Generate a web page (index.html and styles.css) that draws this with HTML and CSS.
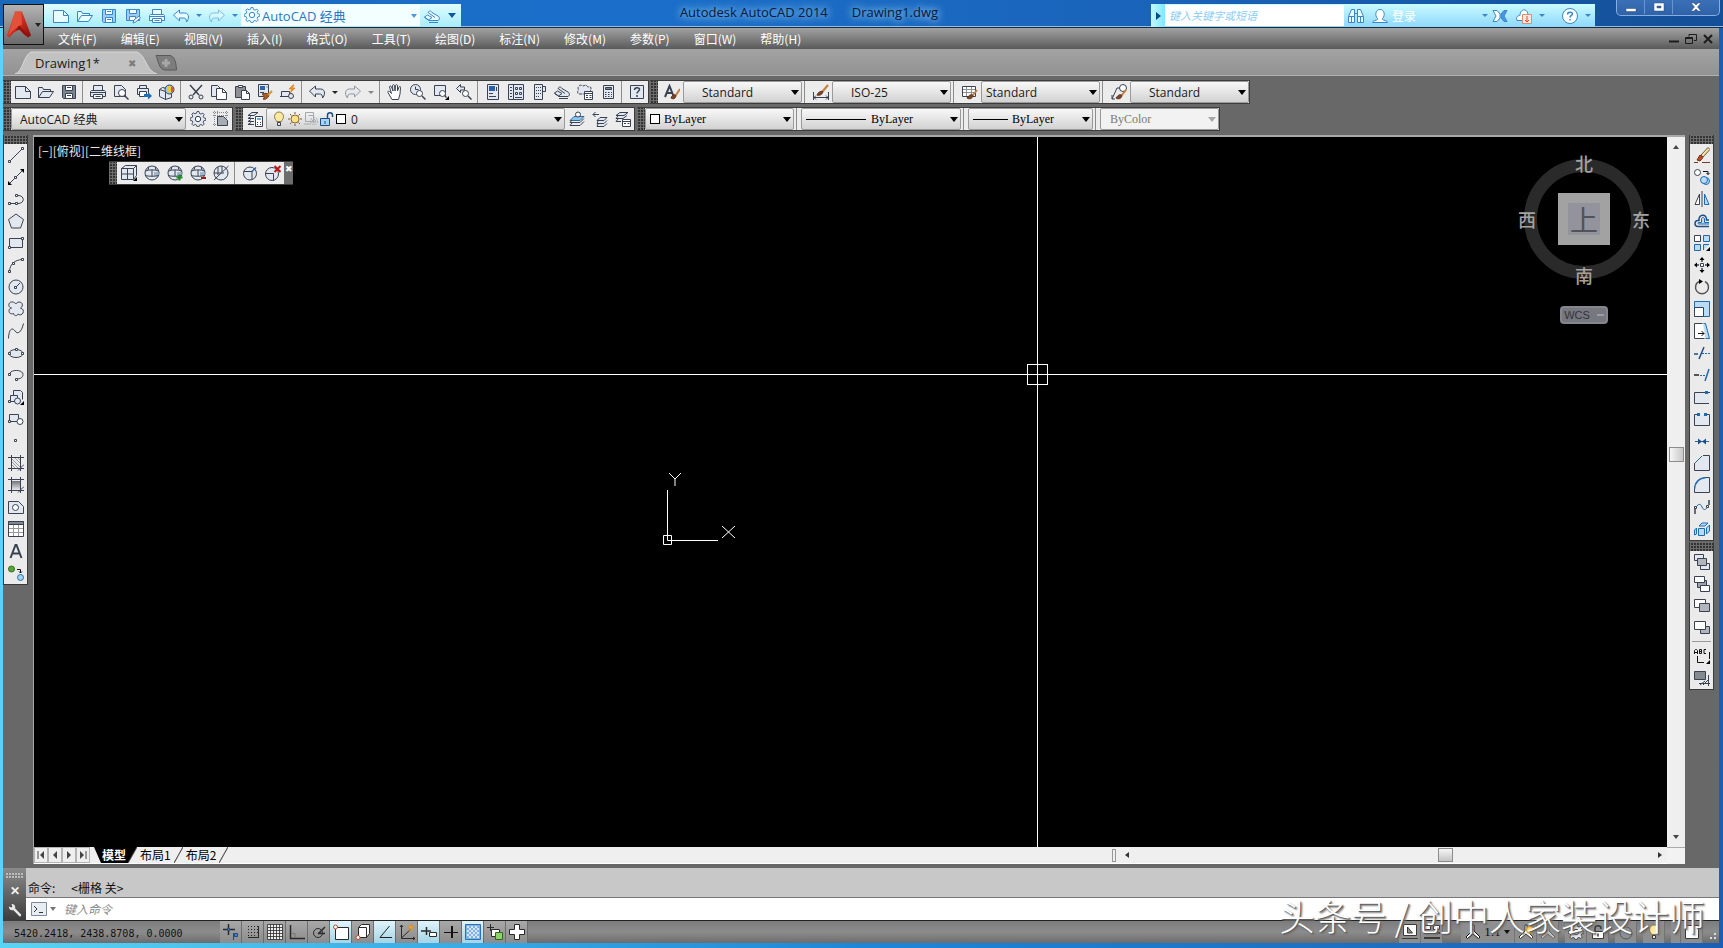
FILE: index.html
```html
<!DOCTYPE html>
<html lang="zh-CN">
<head>
<meta charset="utf-8">
<title>Autodesk AutoCAD 2014 Drawing1.dwg</title>
<link rel="stylesheet" href="styles.css">
</head>
<body>
<svg class="sprite" aria-hidden="true">
  <defs>
    <linearGradient id="redA" x1="0" y1="0" x2="1" y2="1"><stop offset="0" stop-color="#f0604a"/><stop offset=".55" stop-color="#c8281c"/><stop offset="1" stop-color="#7d0d0a"/></linearGradient>
    <linearGradient id="grayDown" x1="0" y1="0" x2="0" y2="1"><stop offset="0" stop-color="#70747a"/><stop offset="1" stop-color="#e6e8ea"/></linearGradient>
  </defs>
  <symbol id="new" viewBox="0 0 16 16"><path class="f" d="M.5 2.500h10l5 5v7H.5z"/><path d="M10.500 2.500v5h5"/></symbol>
  <symbol id="open" viewBox="0 0 16 16"><path class="f" d="M.5 13.500V3.500h4l1 2h7v2M.5 13.500l4-6h11l-4 6z"/></symbol>
  <symbol id="save" viewBox="0 0 16 16"><path class="d" d="M1.500 1.500h13v13h-12l-1-1z"/><path class="w" d="M4.500 1.500h7v5h-7zM4.500 9.500h7v5h-7z"/><path d="M6 11.500h4M6 3.500h4"/></symbol>
  <symbol id="saveas" viewBox="0 0 16 16"><path class="d" d="M1.500 1.500h13v11h-13z"/><path class="w" d="M4.500 1.500h7v4h-7zM4.500 8.500h6v4h-6z"/><path class="w" d="M8 15l1-3 5-4 1.500 2-5 4z"/></symbol>
  <symbol id="print" viewBox="0 0 16 16"><path class="f" d="M3.500 6V1.500h9V6"/><path class="f" d="M1.500 6.500h13l1 1v5H.5v-5z"/><path class="w" d="M3.500 10.500h9v4h-9z"/><path d="M.5 8.500h15M5.500 12.500h5"/></symbol>
  <symbol id="preview" viewBox="0 0 16 16"><path class="f" d="M1.500 12.500v-11h7l4 4v7z"/><circle class="w" cx="9" cy="9" r="3.500"/><path class="b2" d="M11.500 11.500l4 4"/></symbol>
  <symbol id="publish" viewBox="0 0 16 16"><path class="f" d="M3.500 4V1.500h7V4M1.500 4.500h11v6h-11z"/><path class="w" d="M3.500 7.500h7v5h-7z"/><path fill="#1e6fb8" stroke="none" d="M8 10h4V8l4 4-4 3.500V13H8z"/></symbol>
  <symbol id="print3d" viewBox="0 0 16 16"><path class="f" d="M.5 5.500l3-2 9 2v8l-6 2-6-3z"/><path d="M.5 5.500l6 2v8"/><circle cx="10.500" cy="5.500" r="4.500" fill="#8fd0ee"/><path fill="#f0c43c" stroke="none" d="M9 2l3 0 0 7-3-1z"/><path fill="#df5133" stroke="none" d="M12 2.500l2 1v4l-2 1z"/></symbol>
  <symbol id="cut" viewBox="0 0 16 16"><path class="b2" d="M2 1l9 10M14 1L5 11"/><circle cx="3" cy="13" r="2"/><circle cx="13" cy="13" r="2"/></symbol>
  <symbol id="copy" viewBox="0 0 16 16"><path class="f" d="M.5 12.500v-11h6l3 3v8z"/><path class="w" d="M5.500 15.500v-11h6l4 4v7z"/><path d="M11.500 4.500v4h4"/></symbol>
  <symbol id="paste" viewBox="0 0 16 16"><path fill="#8f8f8f" d="M1.500 2.500h10v11h-10z"/><path class="w" d="M4.500 1.500h4v2h-4z"/><path class="w" d="M7.500 6.500h5l3 3v6h-8z"/><path d="M12.500 6.500v3h3"/></symbol>
  <symbol id="match" viewBox="0 0 16 16"><path class="f" d="M1.500.5h10v12h-10z"/><path fill="#2866b4" stroke="none" d="M3 2h5v4H3z"/><path d="M3 8.500h4M9.500 3h1"/><path fill="#a25c28" stroke="#6f3c18" d="M5 10c3-1 6-1 7 1-1 4-5 5-6 4 2-1 1-3-1-5z"/><path stroke="#d99537" stroke-width="2" d="M11 11l4-4"/></symbol>
  <symbol id="blockedit" viewBox="0 0 16 16"><path class="f" d="M1.500 12.500v-5h8v5z"/><circle class="f" cx="11" cy="12" r="2.500"/><path d="M0 12.500h3"/><path fill="#f59a1e" stroke="#dc7a12" stroke-width=".7" d="M13 1l-4 4h3l-2 4 5-5h-3l2-3z"/></symbol>
  <symbol id="undo" viewBox="0 0 16 16"><path class="f" d="M.5 7l6-5v3h5c3 0 4 2 4 4s-1 4-2 5c0-3-1-4-3-4h-4v3z"/></symbol>
  <symbol id="redo" viewBox="0 0 16 16"><path class="f" d="M15.500 7l-6-5v3h-5c-3 0-4 2-4 4s1 4 2 5c0-3 1-4 3-4h4v3z"/></symbol>
  <symbol id="pan" viewBox="0 0 16 16"><path class="w" d="M5 15.500l-4-7c-.5-1.500 1-2 2-.5l1.500 1.500L2.500 3c0-1 1.500-1.500 2 0L6 7 5.500 1.500c0-1 2-1 2 0L8 7l.5-5.500c0-1 2-1 2 0L10.500 7l1.500-4c.5-1 2-.5 1.500.5L13 10l-1.500 5.500z"/></symbol>
  <symbol id="zoomrt" viewBox="0 0 16 16"><circle class="f" cx="5.500" cy="5.500" r="5"/><path d="M5.500 2.500v3h3"/><circle class="w" cx="9.500" cy="9.500" r="3"/><path class="b2" d="M12 12l3.500 3.500"/></symbol>
  <symbol id="zoomwin" viewBox="0 0 16 16"><path class="f" d="M1.500 1.500h11v10h-11z"/><circle class="w" cx="9.500" cy="9.500" r="3"/><path class="b2" d="M12 12l1.500 1.500"/><path class="k" d="M16 12v4h-4z"/></symbol>
  <symbol id="zoomprev" viewBox="0 0 16 16"><path class="f" d="M.5 4.500l4-4v2.500h4v3h-4v2.500z"/><circle class="w" cx="9.500" cy="9.500" r="3"/><path class="b2" d="M12 12l3.500 3.500"/></symbol>
  <symbol id="props" viewBox="0 0 16 16"><path class="f" d="M2.500.5h11v15h-11z"/><path fill="#2d5fa8" stroke="none" d="M4 2h6v5H4z"/><path d="M11.500 3v4M4 9.500h4M4 12.500h7"/></symbol>
  <symbol id="design" viewBox="0 0 16 16"><path class="f" d="M.5.5h15v15H.5zM5.500.5v15"/><path d="M7.500 3.500h2v2h-2zM11.500 3.500h2v2h-2zM7.500 8.500h2v2h-2zM11.500 8.500h2v2h-2zM2 3.500h2M2 6.500h2M2 9.500h2M2 12.500h2M7 13.500h7"/></symbol>
  <symbol id="palettes" viewBox="0 0 16 16"><path class="f" d="M3.500.5h8v15h-8zM11.500 2.500h3v5h-3z"/><path d="M5 3.500h1M7 3.500h1M9 3.500h1M5 6.500h1M7 6.500h1M9 6.500h1M5 9.500h1M7 9.500h1M9 9.500h1M5 12.500h1M7 12.500h1"/></symbol>
  <symbol id="sheet" viewBox="0 0 16 16"><path class="f" d="M.5 9l3-2L8 9.500 4.500 12zM4 4.500c1-2 3-2 4 0l5 3c3 1 3 4 1 5H5l-4.500-3"/><path d="M5 14.500h9M4 4.500l7 5"/></symbol>
  <symbol id="markup" viewBox="0 0 16 16"><path class="f" d="M2 2c2-2 3 0 4 0s3-2 4 0 4 0 4 2-1 2 0 4-2 2-3 2H3c-2 0-3-1-2-3S0 4 2 2z" stroke-dasharray="3 1"/><path class="w" d="M7.500 7.500h8v8h-8z"/><path d="M7.500 9.500h8M9 11.500h2M9 13.500h2M12.500 11.500h2M12.500 13.500h2"/></symbol>
  <symbol id="calc" viewBox="0 0 16 16"><path class="f" d="M3.500 1.500h10v13h-10z"/><path class="d" d="M5.500 3.500h6v2h-6z"/><path d="M5 8.500h1.500M8 8.500h1.500M11 8.500h1M5 10.500h1.500M8 10.500h1.500M11 10.500h1M5 12.500h1.500M8 12.500h1.500M11 12.500h1"/></symbol>
  <symbol id="help" viewBox="0 0 16 16"><path class="f" d="M1.500 1.500h13v13h-13z"/><path class="b2" d="M5.500 6c0-3 5-3 5-.5C10.500 7 8 7.500 8 9.500M8 11v2"/></symbol>
  <symbol id="textstyle" viewBox="0 0 16 16"><path stroke-width="2" d="M1 13L5.500 2 9.500 12M3 9h5"/><path fill="#7b4424" stroke="#5f3319" d="M7 14c1-3 3-4 5-3 0 3-2 5-5 3z"/><path stroke="#c97d3a" stroke-width="2" d="M12 11l4-6"/></symbol>
  <symbol id="dimstyle" viewBox="0 0 16 16"><path d="M.5 8v8M15.500 8v8M1 13.500h14M3 11.500l-2 2 2 2M13 11.500l2 2-2 2"/><path fill="#7b4424" stroke="#5f3319" d="M4 11c1-3 4-4 6-4 0 3-3 5-6 4z"/><path stroke="#c97d3a" stroke-width="2" d="M10 7l5-6"/></symbol>
  <symbol id="tablestyle" viewBox="0 0 16 16"><path class="w" d="M.5 2.500h13v10H.5z"/><path stroke="#8a9098" d="M1 5.500h12M1 8.500h12M4.500 3v9M9.500 3v9"/><path fill="#7b4424" stroke="#5f3319" d="M5 14c2-3 4-4 6-3 0 3-3 5-6 3z"/><path stroke="#c97d3a" stroke-width="2" d="M11 11l4-5"/></symbol>
  <symbol id="mleader" viewBox="0 0 16 16"><path d="M1 15L6 4h4M1 11v4h3"/><circle class="w" cx="12" cy="4" r="3.500"/><path fill="#7b4424" stroke="#5f3319" d="M5 14c2-3 4-4 6-3 0 3-3 5-6 3z"/><path stroke="#c97d3a" stroke-width="2" d="M11 11l4-5"/></symbol>
  <symbol id="gear" viewBox="0 0 16 16"><path class="f" stroke-width=".9" d="M7 .5h2l.5 2 1.500.6 1.800-1 1.400 1.400-1 1.800.6 1.500 2 .5v2l-2 .5-.6 1.500 1 1.800-1.400 1.400-1.800-1-1.500.6-.5 1.600H7l-.5-1.600-1.500-.6-1.800 1-1.400-1.400 1-1.800-.6-1.500-2-.5V7l2-.5.6-1.500-1-1.800L3.200 1.800l1.800 1 1.500-.6z"/><circle class="w" cx="8" cy="8" r="2.700"/></symbol>
  <symbol id="wssave" viewBox="0 0 16 16"><path stroke="#888" d="M0 1.500h16M0 4.500h16M1.500 0v16M4.500 0v16M13.500 0v16M0 13.500h16" stroke-dasharray="1 1"/><path fill="#a9adb3" d="M4.500 14.500v-9h6l4 4v5z"/></symbol>
  <symbol id="layerprops" viewBox="0 0 16 16"><path class="f" d="M5 1.500h6l-4 3H1zM1 7.500h6M1 10.500h6M1 13.500h6M1 7.500l3-2M1 10.500l3-2M1 13.500l3-2"/><path class="w" d="M8.500 5.500h7v10h-7z"/><path fill="#6faee0" stroke="none" d="M10 7h4v2h-4z"/><path d="M10 11.500h1M13 11.500h1M10 13.500h1M13 13.500h1"/></symbol>
  <symbol id="bulb" viewBox="0 0 16 16"><path fill="#ffe9a0" stroke="#8a7a4a" d="M5.500 10.500c0-1-2-2.500-2-5a4.500 4.500 0 0 1 9 0c0 2.500-2 4-2 5z"/><path class="f" d="M6.500 11.500h3v3h-3z"/></symbol>
  <symbol id="sun" viewBox="0 0 16 16"><circle cx="8" cy="8" r="4" fill="#ffe08a" stroke="#8a6a30"/><path stroke="#7a5a30" d="M8 1v2M8 13v2M1 8h2M13 8h2M3 3l1.500 1.500M11.500 11.500L13 13M3 13l1.500-1.500M11.500 4.500L13 3"/></symbol>
  <symbol id="freeze" viewBox="0 0 16 16"><g stroke="#a4a8ad"><path d="M2.500 1.500h8v9h-8zM5.500 4.500h5M1 13h7"/><circle cx="11" cy="10" r="3.500" stroke-dasharray="2 1"/><circle cx="11" cy="10" r="1.500"/></g></symbol>
  <symbol id="lock" viewBox="0 0 16 16"><path fill="#a9d3f2" stroke="#1f4f80" d="M1.500 7.500h9v7h-9z"/><path stroke="#1f4f80" stroke-width="1.500" d="M8.500 7V4c0-3 5-3 5 0v2"/><path stroke="#1f4f80" d="M6 10v3"/></symbol>
  <symbol id="layercur" viewBox="0 0 16 16"><path fill="#8cc6ee" stroke="#2f6b9c" d="M5 5.500h10l-4 4H1z"/><path d="M3 9l-2 2.500h10l4-4M3 12l-2 2.500h10l4-4"/><circle class="w" cx="9" cy="3.500" r="2.500"/></symbol>
  <symbol id="layerprev" viewBox="0 0 16 16"><path d="M1 3.500h6M3.500 1L1 3.500 3.500 6"/><path class="f" d="M8 6.500h7l-3 3H5zM6 10l-1 2.500h7l3-3M6 13l-1 2.500h7l3-3"/></symbol>
  <symbol id="layerstate" viewBox="0 0 16 16"><path class="f" d="M5 1.500h8l-4 3H1zM3 5l-2 2.500h7l4-3M3 8l-2 2.500h5"/><path class="w" d="M7.500 8.500h8v7h-8z"/><path d="M7.500 10.500h8M9 12.500h2M12.500 12.500h2"/></symbol>
  <symbol id="line" viewBox="0 0 16 16"><path d="M2 14L14 2"/><path class="w" d="M.5 13.500h2v2h-2zM13.500.5h2v2h-2z"/></symbol>
  <symbol id="xline" viewBox="0 0 16 16"><path d="M1 15L15 1"/><path class="k" d="M16 0v4l-4-4zM0 16v-4l4 4z"/><path class="w" d="M6.500 7.500h2v2h-2z"/></symbol>
  <symbol id="pline" viewBox="0 0 16 16"><path d="M1 12.500h9c7 0 7-8 0-8H9"/><path class="w" d="M.5 11.500h2v2h-2zM7.500 11.500h2v2h-2zM7.500 3.500h2v2h-2z"/></symbol>
  <symbol id="polygon" viewBox="0 0 16 16"><path class="f" d="M8 1l7.500 5.500-3 8.500h-9l-3-8.500z"/></symbol>
  <symbol id="rect" viewBox="0 0 16 16"><path class="f" d="M1.500 3.500h13v9h-13z"/><path class="w" d="M.5 11.500h2v2h-2zM13.500 2.500h2v2h-2z"/></symbol>
  <symbol id="arc" viewBox="0 0 16 16"><path d="M1.500 14C2 7 7 3 14 2.500"/><path class="w" d="M.5 13.500h2v2h-2zM4.500 5.500h2v2h-2zM13.500 1.500h2v2h-2z"/></symbol>
  <symbol id="circle" viewBox="0 0 16 16"><circle class="f" cx="8" cy="8" r="7"/><path d="M8 8l4-4"/><path class="w" d="M6.500 7.500h2v2h-2z"/></symbol>
  <symbol id="cloud" viewBox="0 0 16 16"><path class="f" d="M8 3C9 .5 13 .5 14 2.500s0 3.500-1.500 4.500c2.500.5 3.500 3 2.500 5s-3.500 2.500-5 1c-1 2.500-4 2-4.500-.5C3 13.500.5 12 1 9.500S3 7 3.500 7C1 6.500 0 4 1.500 2S6.500 1 8 3z"/></symbol>
  <symbol id="spline" viewBox="0 0 16 16"><path d="M.5 15.500C1 4 5 5 7 8s6 3 8.500-7.500"/></symbol>
  <symbol id="ellipse" viewBox="0 0 16 16"><ellipse class="f" cx="8" cy="8.500" rx="7" ry="4"/><path class="w" d="M.5 7.500h2v2h-2zM13.500 7.500h2v2h-2zM7.500 3.500h2v2h-2z"/></symbol>
  <symbol id="earc" viewBox="0 0 16 16"><path d="M1.500 8C1 2 15 2 15 7.500c0 3-3 4.500-6 4.500"/><path class="w" d="M.5 6.500h2v2h-2zM7.500 11.500h2v2h-2z"/></symbol>
  <symbol id="insert" viewBox="0 0 16 16"><path class="f" d="M5.500 6V1.500h7l2 2v7"/><path class="f" d="M2.500 6.500h7v6h-7z"/><circle class="f" cx="9.500" cy="12" r="3"/><path class="w" d="M.5 11.500h2v2h-2z"/><path class="k" d="M16 12v4h-4z"/></symbol>
  <symbol id="block" viewBox="0 0 16 16"><path class="f" d="M1.500 10.500v-7h9v7z"/><circle class="w" cx="12" cy="10.500" r="3"/><path class="w" d="M.5 9.500h2v2h-2z"/></symbol>
  <symbol id="point" viewBox="0 0 16 16"><path class="w" d="M6.500 6.500h2v2h-2z"/></symbol>
  <symbol id="hatch" viewBox="0 0 16 16"><path stroke="#888" stroke-width=".8" d="M4 4l8 8M4 7l6 6M4 10l3 3M7 3l5 5M10 3l2 2"/><path d="M3.500 0v16M12.500 0v16M0 2.500h16M0 13.500h16M10 15.500l6-6"/></symbol>
  <symbol id="gradient" viewBox="0 0 16 16"><path fill="url(#grayDown)" stroke="none" d="M4 4h8v9H4z"/><path d="M3.500 0v16M12.500 0v16M0 2.500h16M0 13.500h16M10 15.500l6-6"/></symbol>
  <symbol id="region" viewBox="0 0 16 16"><path class="f" d="M.5 14.500v-12h10l5 5v7z"/><circle class="w" cx="7.500" cy="8.500" r="3"/></symbol>
  <symbol id="table" viewBox="0 0 16 16"><path class="w" d="M.5.5h15v15H.5z"/><path fill="#82878e" d="M.5.5h15v3H.5z"/><path stroke="#999" d="M1 7.500h14M1 11.500h14M5.500 4v11M10.500 4v11"/></symbol>
  <symbol id="mtext" viewBox="0 0 16 16"><path stroke-width="2" d="M2.500 15L7.500 2h1l5 13M4.500 10.500h7"/></symbol>
  <symbol id="addsel" viewBox="0 0 16 16"><circle cx="3.500" cy="4" r="3" fill="#5aa63a" stroke="#38701f"/><circle cx="12.500" cy="12.500" r="3" fill="#9fd4f5" stroke="#2b6fa8"/><path d="M9 4.500h3.500V8M11 6.500l1.500 1.500L14 6.500" stroke="#111"/></symbol>
  <symbol id="erase" viewBox="0 0 16 16"><path stroke="#7b3b22" d="M0 15.500h4M8 15.500h8"/><path fill="#f3e2a0" stroke="#6b5a3a" d="M7 8l7-7.500 2 2-7 7.500z"/><path fill="#c24a2a" stroke="#7b2b12" d="M3 13l3-5 3 2.500-3 3.500z"/></symbol>
  <symbol id="mcopy" viewBox="0 0 16 16"><circle class="w" cx="3.500" cy="3.500" r="3"/><path stroke="#111" d="M9 2.500h5v3M12.500 4l1.500 1.500L15.500 4"/><g fill="#b8dcf6" stroke="#1e6bb0"><circle cx="12" cy="12" r="3.500"/><circle cx="10" cy="11" r="3.500"/></g></symbol>
  <symbol id="mirror" viewBox="0 0 16 16"><path class="w" d="M5.500 3v10.500H1z"/><path d="M8 0v16"/><path fill="#b8dcf6" stroke="#1e6bb0" d="M10.500 3v10.500H15z"/></symbol>
  <symbol id="offset" viewBox="0 0 16 16"><path stroke-width="1.500" stroke="#1e4f88" d="M15 13.500H4c-4 0-4-6 0-6h1C4 1 13 0 12.500 7H15"/><path fill="#b8dcf6" stroke="#1e6bb0" d="M15 11H5c-1.500 0-1.500-1.500 0-1.500h2.500V6c0-2 3-2 3 0v3.500H15"/></symbol>
  <symbol id="array" viewBox="0 0 16 16"><path class="w" d="M.5.5h6v6h-6z"/><path fill="#b8dcf6" stroke="#1e6bb0" d="M9.500.5h6v6h-6zM.5 9.500h6v6h-6zM15 9.500H9.500V15"/><path class="k" d="M16 12v4h-4z"/></symbol>
  <symbol id="move" viewBox="0 0 16 16"><path class="w" d="M6.500 6.500h3v3h-3z"/><path stroke-width="1.500" d="M8 5V2M8 11v3M5 8H2M11 8h3"/><path class="k" d="M8 0l2.500 3h-5zM8 16l2.500-3h-5zM0 8l3-2.500v5zM16 8l-3-2.500v5z"/></symbol>
  <symbol id="rotate" viewBox="0 0 16 16"><path stroke="#555" stroke-width="1.500" d="M11 2.500a6.500 6.500 0 1 1-6 0"/><path class="k" d="M5 0l4 2.500L5 5z"/></symbol>
  <symbol id="scale" viewBox="0 0 16 16"><path fill="#b8dcf6" stroke="#1e6bb0" d="M.5.5h15v15H.5z"/><path class="w" d="M.5 6.500h9v9h-9z"/></symbol>
  <symbol id="stretch" viewBox="0 0 16 16"><path class="w" d="M8.500.5h-8v15h10"/><path fill="#b8dcf6" stroke="#1e6bb0" d="M9.500.5h2l4 15h-4"/><path stroke="#111" d="M4 10.500h6M7.500 8l2.500 2.500L7.500 13"/></symbol>
  <symbol id="trim" viewBox="0 0 16 16"><path stroke="#1e4f88" stroke-width="1.500" d="M0 9h4M5 14l5-12"/><path stroke="#1e6bb0" stroke-dasharray="2 1" d="M8 8.500h8"/></symbol>
  <symbol id="extend" viewBox="0 0 16 16"><path stroke="#222" stroke-width="1.500" d="M0 8h5"/><path stroke="#1e6bb0" stroke-dasharray="2 1" d="M6 8.500h6"/><path stroke="#1e6bb0" stroke-width="1.500" d="M11 14l4-12"/></symbol>
  <symbol id="breakpt" viewBox="0 0 16 16"><path class="f" d="M16 3.500H.5v11H15"/><path fill="#1e6bb0" stroke="none" d="M11 2h3v3h-3z"/></symbol>
  <symbol id="break" viewBox="0 0 16 16"><path class="f" stroke="none" d="M1 4h14v10H1z"/><path d="M3 3.500H.5v11h15v-11H13"/><path fill="#1e6bb0" stroke="none" d="M3 2h3v3H3zM10 2h3v3h-3z"/></symbol>
  <symbol id="join" viewBox="0 0 16 16"><path stroke="#1e6bb0" d="M1 8.500h14"/><path fill="#1e4f88" stroke="none" d="M4 5.500L8 8.500l-4 3zM12 5.500L8 8.500l4 3z"/></symbol>
  <symbol id="chamfer" viewBox="0 0 16 16"><path class="f" stroke="none" d="M1 8l8-7h6v14H1z"/><path d="M.5 8v7.500h15V.5H9"/><path stroke="#1e6bb0" d="M1 8l7-7"/></symbol>
  <symbol id="fillet" viewBox="0 0 16 16"><path class="f" stroke="none" d="M.5 12C1 5 5 1 12 .5h3v15H1z"/><path d="M.5 12v3.500h15V.5H12"/><path stroke="#1e6bb0" stroke-width="1.500" d="M.5 12C1 5 5 1 12 .5"/></symbol>
  <symbol id="blend" viewBox="0 0 16 16"><path stroke="#1e6bb0" d="M2 8c3-4 5-3 6 0s4 4 6-1"/><path stroke-width="1.500" d="M1 15V9M15 6V1"/><path class="w" d="M.5 7.500h2v2h-2zM12.500 6.500h2v2h-2z"/></symbol>
  <symbol id="explode" viewBox="0 0 16 16"><path fill="#b8dcf6" stroke="#1e6bb0" d="M4.500 7.500h6v7h-6zM5 5l3-3h6l-3 3zM12.500 7l3-3v6l-3 3zM2.500 7l-2 2v5l2-1z"/></symbol>
  <symbol id="front" viewBox="0 0 16 16"><path class="f" d="M.5.5h9v6h-9zM6.500 9.500h9v6h-9z"/><path fill="#b2b6ba" d="M3.500 4.500h9v7h-9z"/></symbol>
  <symbol id="back" viewBox="0 0 16 16"><path fill="#9ea3a8" d="M3.500 4.500h9v7h-9z"/><path class="w" d="M.5.5h10v6H.5zM6.500 9.500h9v6h-9z"/></symbol>
  <symbol id="above" viewBox="0 0 16 16"><path class="w" d="M.5 1.500h11v8H.5z"/><path fill="#b2b6ba" d="M5.500 5.500h10v8h-10z"/></symbol>
  <symbol id="under" viewBox="0 0 16 16"><path fill="#b2b6ba" d="M6.500 6.500h9v7h-9z"/><path class="w" d="M.5 1.500h11v8H.5z"/></symbol>
  <symbol id="textfront" viewBox="0 0 16 16"><path stroke="#111" d="M.5 6V2.500l1-1h1l1 1V6M.5 4.500h3M5.500 1.500v4h2v-4zM5.500 3.500h2M12 1.500h-2v4h2M3.500 8v6.500H10M15.500 4v7"/><path class="k" d="M16 12v4h-4z"/></symbol>
  <symbol id="hatchback" viewBox="0 0 16 16"><path fill="#858a90" d="M.5 1.500h11v8H.5z"/><path d="M5 13.500h11M14.500 5v11M6 15l5-4M9 15l6-6"/></symbol>
  <symbol id="cubewire" viewBox="0 0 16 16"><path class="f" d="M.5 3.500l4-3h11v10l-3 4H.5zM.5 3.500h12l3-3M12.500 3.500v11M6.500 3.500v11M.5 9h12"/><path class="k" d="M16 12v4h-4z"/></symbol>
  <symbol id="sphere" viewBox="0 0 16 16"><circle class="f" cx="8" cy="8" r="7"/><path fill="#8fa9c2" stroke="none" opacity=".8" d="M10 7h5v4h-5z"/><path d="M1.500 6c3-1.500 10-1.500 13 0M1 10.500c3 1 11 1 14 0M8 5v6M5 1.500L4 5M11 1.500l1 3.500"/></symbol>
  <symbol id="sphplus" viewBox="0 0 16 16"><use href="#sphere"/><path stroke="#1d8c1d" stroke-width="2" d="M12.500 9.500v6M9.500 12.500h6"/></symbol>
  <symbol id="sphminus" viewBox="0 0 16 16"><use href="#sphere"/><path stroke="#a01818" stroke-width="2" d="M11 13h5"/></symbol>
  <symbol id="sphoff" viewBox="0 0 16 16"><circle class="f" cx="8" cy="8" r="7"/><path d="M5 2v8M9 1v6M1 8h10M1 15L15.500 1"/></symbol>
  <symbol id="crease" viewBox="0 0 16 16"><circle class="f" cx="8" cy="8.500" r="6.500"/><path d="M2 6.500h8v8"/><path stroke="#2d5fa8" stroke-width="1.500" d="M10 6.500l4-4"/></symbol>
  <symbol id="creaseoff" viewBox="0 0 16 16"><circle class="f" cx="7" cy="9" r="6.500"/><path d="M.5 8.500h8v7"/><path stroke="#c01616" stroke-width="2" d="M9.500 1l6 6M15.500 1l-6 6"/></symbol>
  <symbol id="binoc" viewBox="0 0 16 16"><path class="f" d="M.5 14.500v-6l3-7h3v13zM15.500 14.500v-6l-3-7h-3v13zM6.500 5.500h3M.5 8.500h6M9.500 8.500h6M3.500 9v5M12.500 9v5"/></symbol>
  <symbol id="person" viewBox="0 0 16 16"><path class="w" d="M.5 14.500c0-2 4-2 5-3v-1c-3-3-2-9 2.500-9s5.500 6 2.500 9v1c1 1 5 1 5 3z"/></symbol>
  <symbol id="exchange" viewBox="0 0 16 16"><path class="w" d="M1 2.500h4L8 6v4l-3 3.500H1l3-5.500z"/><path fill="#4c95dc" d="M15 2.500h-3L9 6v4l3 3.500h3L12 8z"/></symbol>
  <symbol id="connect" viewBox="0 0 16 16"><path class="w" d="M6 12.500H1c-2-5 3-5 3-5 0-7 8-8 8 0"/><path fill="#ffe6dc" stroke="#d8907e" d="M6.500 6.500h9v9h-9z"/><path stroke="#d8502e" d="M11 8v6M9 12l2 2 2-2"/></symbol>
  <symbol id="qmark" viewBox="0 0 16 16"><circle class="w" cx="8" cy="8" r="7.500"/><path stroke-width="1.500" d="M5.500 6.500c0-3 5-3 5-.5C10.500 7.500 8 7.500 8 9.500M8 11v1.500"/></symbol>
  <symbol id="wrench" viewBox="0 0 16 16"><path fill="#e8e8e8" stroke="none" d="M1 4l3 1 1-1-1-3c3 0 5 2 4 5l7 7c0 2-1 3-2 2L6 8C3 9 1 7 1 4z"/></symbol>
  <symbol id="prompt" viewBox="0 0 16 16"><path fill="#e8edf4" stroke="#7a8aa0" d="M.5 1.500h15v13H.5z"/><path stroke="#333" d="M3 5l3 3-3 3M8 11.500h4"/></symbol>
  <symbol id="infer" viewBox="0 0 16 16"><path class="b2" d="M0 5.500h12M5.500 0v11"/><path fill="#4a86c8" stroke="#214a80" d="M4.500 4.500h2v2h-2zM11.500 9.500h3v3h-3zM10.500 9v7"/></symbol>
  <symbol id="snap" viewBox="0 0 16 16"><path stroke="#222" stroke-dasharray="1 2" d="M3 2.500h10M3 5.500h10M3 8.500h10M3 11.500h8"/><path d="M13.500 2v11M3 13.500h11"/></symbol>
  <symbol id="grid" viewBox="0 0 16 16"><path fill="#eee" stroke-width=".8" d="M.5.500h15v15H.5zM3.500.5v15M6.500.5v15M9.500.5v15M12.500.5v15M.5 3.500h15M.5 6.500h15M.5 9.500h15M.5 12.500h15"/></symbol>
  <symbol id="ortho" viewBox="0 0 16 16"><path stroke-width="1.500" d="M1.500 1v13.500H16"/><path stroke="#777" d="M2 9.500h4V14"/></symbol>
  <symbol id="polar" viewBox="0 0 16 16"><circle cx="7" cy="9" r="4.500"/><path class="b2" d="M7 10l7-7M7 9.500h7"/></symbol>
  <symbol id="osnap" viewBox="0 0 16 16"><path class="w" d="M2.500 3.500h13v12h-13z"/><circle cx="2.500" cy="3" r="2" fill="#fff" stroke="#c8452a"/></symbol>
  <symbol id="osnap3" viewBox="0 0 16 16"><path class="w" d="M3.500 3.500l3-3h8v9l-3 4h-8zM3.500 3.500h8v10"/><circle cx="3" cy="13.500" r="2" fill="#fff" stroke="#c8452a"/></symbol>
  <symbol id="otrack" viewBox="0 0 16 16"><path stroke="#222" d="M12.500 2L3 13.500h12"/></symbol>
  <symbol id="ducs" viewBox="0 0 16 16"><path d="M2.500 1v13.500H16M2.500 14L12 5M1 3l1.500-2L4 3M14 13l2 1.500-2 1.500"/><path fill="#f6b23c" stroke="#d98612" stroke-width=".7" d="M13 0l-4 4h3l-2 4 5-5h-3z"/></symbol>
  <symbol id="dyn" viewBox="0 0 16 16"><path class="b2" d="M0 7h10M5.500 3v8"/><path class="w" d="M8.500 8.500h7v4h-7z"/></symbol>
  <symbol id="lwt" viewBox="0 0 16 16"><path stroke="#111" d="M1 8.500h14"/><path stroke="#111" stroke-width="2" d="M9 2v12"/></symbol>
  <symbol id="tpy" viewBox="0 0 16 16"><path fill="#7fb4e4" stroke="#2f6fb4" d="M.5.5h15v15H.5z"/><path stroke="#f2f8fd" stroke-width="1.500" stroke-dasharray="2 2" d="M2 3h12M4 5h10M2 7h12M4 9h10M2 11h12M4 13h10"/></symbol>
  <symbol id="qp" viewBox="0 0 16 16"><path d="M0 3.500h7M3.500 0v7"/><path class="w" d="M4.500 5.500h8v7h-8z"/><path fill="#8fcf6c" stroke="#2f6b1c" d="M8.500 8.500h7v7h-7z"/></symbol>
  <symbol id="sc" viewBox="0 0 16 16"><path class="w" d="M5.500.5h5v5h5v5h-5v5h-5v-5h-5v-5h5z"/></symbol>
  <symbol id="modelspace" viewBox="0 0 16 16"><path class="w" d="M1.500.5h13v11h-13zM5.500 3v6h5zM0 14.500h16"/></symbol>
  <symbol id="quickview" viewBox="0 0 16 16"><path class="w" d="M.5 1.500h6v4h-6zM9.500 1.500h6v4h-6z"/><path stroke-width="2" d="M0 9h16M0 14h16"/></symbol>
  <symbol id="annot" viewBox="0 0 16 16"><path class="w" d="M7 1h2v6l6 6-1.500 1.500L8 10l-5.500 4.500L1 13l6-6z"/></symbol>
  <symbol id="annotvis" viewBox="0 0 16 16"><use href="#annot"/><circle cx="12" cy="6" r="3.500" fill="#ffd45a" stroke="#d99a20"/></symbol>
  <symbol id="padlock" viewBox="0 0 16 16"><path class="w" d="M2.500 7.500h11v7h-11z"/><path stroke-width="1.500" d="M5 7V4c0-3 6-3 6 0v1M8 9.500v3"/></symbol>
  <symbol id="hardware" viewBox="0 0 16 16"><circle cx="8" cy="9" r="6" fill="#8b9197" stroke="#555"/><path stroke="#ddd" stroke-width="2" d="M5 4l4 5"/></symbol>
  <symbol id="cleanscreen" viewBox="0 0 16 16"><path class="w" d="M1.500 1.500h13v13h-13z"/></symbol>
</svg>

<div class="window">
  <header class="titlebar">
    <div class="quick">
      <button class="qbtn" aria-label="新建"><svg class="icon"><use href="#new"/></svg></button>
      <button class="qbtn" aria-label="打开"><svg class="icon"><use href="#open"/></svg></button>
      <button class="qbtn" aria-label="保存"><svg class="icon"><use href="#save"/></svg></button>
      <button class="qbtn" aria-label="另存为"><svg class="icon"><use href="#saveas"/></svg></button>
      <button class="qbtn" aria-label="打印"><svg class="icon"><use href="#print"/></svg></button>
      <button class="qbtn" aria-label="放弃"><svg class="icon"><use href="#undo"/></svg></button>
      <button class="drop" aria-label="放弃列表"></button>
      <button class="qbtn faded" aria-label="重做"><svg class="icon"><use href="#redo"/></svg></button>
      <button class="drop" aria-label="重做列表"></button>
      <div class="combo quick-combo"><select aria-label="工作空间"><option>AutoCAD 经典</option></select><svg class="icon combo-art"><use href="#gear"/></svg></div>
      <button class="qbtn" aria-label="图纸集"><svg class="icon"><use href="#sheet"/></svg></button>
      <button class="drop big" aria-label="自定义"></button>
    </div>
    <div class="caption"><span>Autodesk AutoCAD 2014</span><span>Drawing1.dwg</span></div>
    <div class="info">
      <button class="info-toggle" aria-label="展开"></button>
      <input class="search" type="text" placeholder="键入关键字或短语" aria-label="搜索">
      <button class="qbtn" aria-label="查找"><svg class="icon"><use href="#binoc"/></svg></button>
      <button class="login"><svg class="icon"><use href="#person"/></svg><span>登录</span><i class="tri"></i></button>
      <button class="qbtn" aria-label="Exchange"><svg class="icon"><use href="#exchange"/></svg></button>
      <button class="qbtn" aria-label="连接"><svg class="icon"><use href="#connect"/></svg></button>
      <button class="drop" aria-label="连接列表"></button>
      <button class="qbtn last" aria-label="帮助"><svg class="icon"><use href="#qmark"/></svg></button>
      <button class="drop" aria-label="帮助列表"></button>
    </div>
    <div class="sysbtns">
      <button aria-label="最小化"><svg viewBox="0 0 12 12"><path d="M1 7.500h10v3H1z"/></svg></button>
      <button aria-label="最大化"><svg viewBox="0 0 12 12"><path fill-rule="evenodd" d="M1 2h10v8H1zM4 5h4v2H4z"/></svg></button>
      <button class="sys-close" aria-label="关闭"><svg viewBox="0 0 12 12"><path d="M1 2h3l2 2 2-2h3L7.500 6l3.500 4H8L6 8l-2 2H1l3.500-4z"/></svg></button>
    </div>
  </header>
  <button class="app" aria-label="应用程序菜单"><svg class="app-logo" viewBox="0 0 24 26"><path fill="url(#redA)" d="M0 24L8 0h7l9 24-3 2-4-3-5-5-5 3-5 5z"/><path fill="#e2523a" d="M8 0h6l1 13-4 2-6 5-4 5z"/><path fill="#8e120d" d="M12 14l-3 5 4-1 6 6 1-2z"/></svg><i class="tri"></i></button>

  <nav class="menubar">
    <a href="#">文件(F)</a><a href="#">编辑(E)</a><a href="#">视图(V)</a><a href="#">插入(I)</a><a href="#">格式(O)</a><a href="#">工具(T)</a><a href="#">绘图(D)</a><a href="#">标注(N)</a><a href="#">修改(M)</a><a href="#">参数(P)</a><a href="#">窗口(W)</a><a href="#">帮助(H)</a>
    <div class="mdi">
      <button aria-label="最小化图形"><svg viewBox="0 0 12 12"><path d="M1 8.500h10" stroke-width="2"/></svg></button>
      <button aria-label="还原图形"><svg viewBox="0 0 12 12"><path d="M4 3.500V1.500h7.500v6H9M.5 4.500h7v6h-7zM.5 5.500h7"/></svg></button>
      <button aria-label="关闭图形"><svg viewBox="0 0 12 12"><path d="M2 2l8 8M10 2l-8 8" stroke-width="2"/></svg></button>
    </div>
  </nav>

  <div class="filetabs">
    <div class="filetab">
      <svg class="tab-shape" viewBox="0 0 142 23" preserveAspectRatio="none"><path d="M0 23C8 21 8 5 16 1h106c9 3 9 19 20 22z"/></svg>
      <span>Drawing1*</span><button class="tab-x" aria-label="关闭选项卡">✖</button>
    </div>
    <button class="newtab" aria-label="新图形"><svg viewBox="0 0 23 16"><path d="M1 .5h14c4 1 6 5 6.500 14.500H10C4 15 3 5 1 .5z"/><path class="plus" d="M11 4v8M7 8h8"/></svg></button>
  </div>

  <div class="toolrow">
    <div class="toolbar">
      <i class="grip"></i>
      <button class="tool" aria-label="新建"><svg class="icon"><use href="#new"/></svg></button>
      <button class="tool" aria-label="打开"><svg class="icon"><use href="#open"/></svg></button>
      <button class="tool" aria-label="保存"><svg class="icon"><use href="#save"/></svg></button>
      <i class="sep"></i>
      <button class="tool" aria-label="打印"><svg class="icon"><use href="#print"/></svg></button>
      <button class="tool" aria-label="打印预览"><svg class="icon"><use href="#preview"/></svg></button>
      <button class="tool" aria-label="发布"><svg class="icon"><use href="#publish"/></svg></button>
      <button class="tool" aria-label="三维打印"><svg class="icon"><use href="#print3d"/></svg></button>
      <i class="sep"></i>
      <button class="tool" aria-label="剪切"><svg class="icon"><use href="#cut"/></svg></button>
      <button class="tool" aria-label="复制"><svg class="icon"><use href="#copy"/></svg></button>
      <button class="tool" aria-label="粘贴"><svg class="icon"><use href="#paste"/></svg></button>
      <button class="tool" aria-label="特性匹配"><svg class="icon"><use href="#match"/></svg></button>
      <button class="tool" aria-label="块编辑器"><svg class="icon"><use href="#blockedit"/></svg></button>
      <i class="sep"></i>
      <button class="tool" aria-label="放弃"><svg class="icon"><use href="#undo"/></svg></button>
      <button class="drop" aria-label="放弃列表"></button>
      <button class="tool faded" aria-label="重做"><svg class="icon"><use href="#redo"/></svg></button>
      <button class="drop faded" aria-label="重做列表"></button>
      <i class="sep"></i>
      <button class="tool" aria-label="平移"><svg class="icon"><use href="#pan"/></svg></button>
      <button class="tool" aria-label="实时缩放"><svg class="icon"><use href="#zoomrt"/></svg></button>
      <button class="tool" aria-label="窗口缩放"><svg class="icon"><use href="#zoomwin"/></svg></button>
      <button class="tool" aria-label="缩放上一个"><svg class="icon"><use href="#zoomprev"/></svg></button>
      <i class="sep"></i>
      <button class="tool" aria-label="特性"><svg class="icon"><use href="#props"/></svg></button>
      <button class="tool" aria-label="设计中心"><svg class="icon"><use href="#design"/></svg></button>
      <button class="tool" aria-label="工具选项板"><svg class="icon"><use href="#palettes"/></svg></button>
      <button class="tool" aria-label="图纸集管理器"><svg class="icon"><use href="#sheet"/></svg></button>
      <button class="tool" aria-label="标记集管理器"><svg class="icon"><use href="#markup"/></svg></button>
      <button class="tool" aria-label="计算器"><svg class="icon"><use href="#calc"/></svg></button>
      <i class="sep"></i>
      <button class="tool" aria-label="帮助"><svg class="icon"><use href="#help"/></svg></button>
    </div>
    <div class="toolbar styles">
      <i class="grip"></i>
      <button class="tool" aria-label="文字样式管理"><svg class="icon"><use href="#textstyle"/></svg></button>
      <div class="combo w-style indent"><select aria-label="文字样式"><option>Standard</option></select></div>
      <i class="sep"></i>
      <button class="tool" aria-label="标注样式管理"><svg class="icon"><use href="#dimstyle"/></svg></button>
      <div class="combo w-style indent"><select aria-label="标注样式"><option>ISO-25</option></select></div>
      <i class="sep"></i>
      <button class="tool" aria-label="表格样式管理"><svg class="icon"><use href="#tablestyle"/></svg></button>
      <div class="combo w-style"><select aria-label="表格样式"><option>Standard</option></select></div>
      <i class="sep"></i>
      <button class="tool" aria-label="多重引线样式管理"><svg class="icon"><use href="#mleader"/></svg></button>
      <div class="combo w-style indent"><select aria-label="多重引线样式"><option>Standard</option></select></div>
    </div>
  </div>

  <div class="toolrow">
    <div class="toolbar">
      <i class="grip"></i>
      <div class="combo w-space"><select aria-label="工作空间"><option>AutoCAD 经典</option></select></div>
      <button class="tool" aria-label="工作空间设置"><svg class="icon"><use href="#gear"/></svg></button>
      <button class="tool" aria-label="我的工作空间"><svg class="icon"><use href="#wssave"/></svg></button>
    </div>
    <div class="toolbar">
      <i class="grip"></i>
      <button class="tool" aria-label="图层特性"><svg class="icon"><use href="#layerprops"/></svg></button>
      <div class="combo w-layer"><select aria-label="图层"><option>0</option></select>
        <span class="combo-art"><svg class="icon"><use href="#bulb"/></svg><svg class="icon"><use href="#sun"/></svg><svg class="icon"><use href="#freeze"/></svg><svg class="icon"><use href="#lock"/></svg><i class="swatch"></i></span></div>
      <button class="tool" aria-label="置为当前图层"><svg class="icon"><use href="#layercur"/></svg></button>
      <button class="tool" aria-label="上一个图层"><svg class="icon"><use href="#layerprev"/></svg></button>
      <button class="tool" aria-label="图层状态"><svg class="icon"><use href="#layerstate"/></svg></button>
    </div>
    <div class="toolbar props">
      <i class="grip"></i>
      <div class="combo w-color"><select aria-label="颜色"><option>ByLayer</option></select><span class="combo-art"><i class="swatch"></i></span></div>
      <i class="sep"></i>
      <div class="combo w-ltype"><select aria-label="线型"><option>ByLayer</option></select><span class="combo-art"><i class="rule"></i></span></div>
      <i class="sep"></i>
      <div class="combo w-lwt"><select aria-label="线宽"><option>ByLayer</option></select><span class="combo-art"><i class="rule short"></i></span></div>
      <i class="sep"></i>
      <div class="combo w-plot off"><select aria-label="打印样式" disabled><option>ByColor</option></select></div>
    </div>
  </div>

  <main class="work">
    <aside class="side">
      <div class="palette">
        <i class="grip"></i>
        <button class="tool" aria-label="直线"><svg class="icon"><use href="#line"/></svg></button>
        <button class="tool" aria-label="构造线"><svg class="icon"><use href="#xline"/></svg></button>
        <button class="tool" aria-label="多段线"><svg class="icon"><use href="#pline"/></svg></button>
        <button class="tool" aria-label="多边形"><svg class="icon"><use href="#polygon"/></svg></button>
        <button class="tool" aria-label="矩形"><svg class="icon"><use href="#rect"/></svg></button>
        <button class="tool" aria-label="圆弧"><svg class="icon"><use href="#arc"/></svg></button>
        <button class="tool" aria-label="圆"><svg class="icon"><use href="#circle"/></svg></button>
        <button class="tool" aria-label="修订云线"><svg class="icon"><use href="#cloud"/></svg></button>
        <button class="tool" aria-label="样条曲线"><svg class="icon"><use href="#spline"/></svg></button>
        <button class="tool" aria-label="椭圆"><svg class="icon"><use href="#ellipse"/></svg></button>
        <button class="tool" aria-label="椭圆弧"><svg class="icon"><use href="#earc"/></svg></button>
        <button class="tool" aria-label="插入块"><svg class="icon"><use href="#insert"/></svg></button>
        <button class="tool" aria-label="创建块"><svg class="icon"><use href="#block"/></svg></button>
        <button class="tool" aria-label="点"><svg class="icon"><use href="#point"/></svg></button>
        <button class="tool" aria-label="图案填充"><svg class="icon"><use href="#hatch"/></svg></button>
        <button class="tool" aria-label="渐变色"><svg class="icon"><use href="#gradient"/></svg></button>
        <button class="tool" aria-label="面域"><svg class="icon"><use href="#region"/></svg></button>
        <button class="tool" aria-label="表格"><svg class="icon"><use href="#table"/></svg></button>
        <button class="tool" aria-label="多行文字"><svg class="icon"><use href="#mtext"/></svg></button>
        <button class="tool" aria-label="添加选定对象"><svg class="icon"><use href="#addsel"/></svg></button>
      </div>
    </aside>

    <section class="document">
      <div class="canvas">
        <div class="viewlabel">[−][俯视][二维线框]</div>
        <div class="toolbar floating">
          <i class="grip"></i>
          <button class="tool" aria-label="平滑对象"><svg class="icon"><use href="#cubewire"/></svg></button>
          <button class="tool" aria-label="网格"><svg class="icon"><use href="#sphere"/></svg></button>
          <button class="tool" aria-label="提高平滑度"><svg class="icon"><use href="#sphplus"/></svg></button>
          <button class="tool" aria-label="降低平滑度"><svg class="icon"><use href="#sphminus"/></svg></button>
          <button class="tool" aria-label="优化网格"><svg class="icon"><use href="#sphoff"/></svg></button>
          <i class="sep"></i>
          <button class="tool" aria-label="增加锐化"><svg class="icon"><use href="#crease"/></svg></button>
          <button class="tool" aria-label="删除锐化"><svg class="icon"><use href="#creaseoff"/></svg></button>
          <button class="float-x" aria-label="关闭工具栏">✖</button>
        </div>
        <i class="cross-h"></i><i class="cross-v"></i><i class="pickbox"></i>
        <svg class="ucs" viewBox="0 0 76 74"><path d="M5.500 62V17M10 67.500h46M1.500 62.500h8v9h-8zM5.500 62v5.500H10"/><path d="M7 0l6 6 6-6M13 6v7M60 53l13 12M73 53L60 65"/></svg>
        <div class="viewcube">
          <span class="n">北</span><span class="w-dir">西</span><button class="face">上</button><span class="e">东</span><span class="s">南</span>
        </div>
        <button class="wcs"><span>WCS</span><i></i></button>
      </div>
      <div class="vscroll"><button class="up" aria-label="向上"></button><i class="thumb"></i><button class="down" aria-label="向下"></button></div>
      <div class="layoutbar">
        <div class="navs">
          <button aria-label="第一个"><svg viewBox="0 0 12 12"><path d="M3 2v8"/><path class="solid" d="M9 2v8L5 6z"/></svg></button>
          <button aria-label="上一个"><svg viewBox="0 0 12 12"><path class="solid" d="M8 2v8L4 6z"/></svg></button>
          <button aria-label="下一个"><svg viewBox="0 0 12 12"><path class="solid" d="M4 2v8l4-4z"/></svg></button>
          <button aria-label="最后一个"><svg viewBox="0 0 12 12"><path d="M9 2v8"/><path class="solid" d="M3 2v8l4-4z"/></svg></button>
        </div>
        <button class="ltab on">模型</button><i class="slash"></i><button class="ltab">布局1</button><i class="slash"></i><button class="ltab">布局2</button><i class="slash"></i>
        <div class="hscroll"><i class="split"></i><button class="left" aria-label="向左"></button><i class="thumb"></i><button class="right" aria-label="向右"></button></div>
      </div>
      <i class="corner"></i>
    </section>

    <aside class="side right">
      <div class="palette">
        <i class="grip"></i>
        <button class="tool" aria-label="删除"><svg class="icon"><use href="#erase"/></svg></button>
        <button class="tool" aria-label="复制"><svg class="icon"><use href="#mcopy"/></svg></button>
        <button class="tool" aria-label="镜像"><svg class="icon"><use href="#mirror"/></svg></button>
        <button class="tool" aria-label="偏移"><svg class="icon"><use href="#offset"/></svg></button>
        <button class="tool" aria-label="阵列"><svg class="icon"><use href="#array"/></svg></button>
        <button class="tool" aria-label="移动"><svg class="icon"><use href="#move"/></svg></button>
        <button class="tool" aria-label="旋转"><svg class="icon"><use href="#rotate"/></svg></button>
        <button class="tool" aria-label="缩放"><svg class="icon"><use href="#scale"/></svg></button>
        <button class="tool" aria-label="拉伸"><svg class="icon"><use href="#stretch"/></svg></button>
        <button class="tool" aria-label="修剪"><svg class="icon"><use href="#trim"/></svg></button>
        <button class="tool" aria-label="延伸"><svg class="icon"><use href="#extend"/></svg></button>
        <button class="tool" aria-label="打断于点"><svg class="icon"><use href="#breakpt"/></svg></button>
        <button class="tool" aria-label="打断"><svg class="icon"><use href="#break"/></svg></button>
        <button class="tool" aria-label="合并"><svg class="icon"><use href="#join"/></svg></button>
        <button class="tool" aria-label="倒角"><svg class="icon"><use href="#chamfer"/></svg></button>
        <button class="tool" aria-label="圆角"><svg class="icon"><use href="#fillet"/></svg></button>
        <button class="tool" aria-label="光顺曲线"><svg class="icon"><use href="#blend"/></svg></button>
        <button class="tool" aria-label="分解"><svg class="icon"><use href="#explode"/></svg></button>
      </div>
      <div class="palette">
        <i class="grip"></i>
        <button class="tool" aria-label="前置"><svg class="icon"><use href="#front"/></svg></button>
        <button class="tool" aria-label="后置"><svg class="icon"><use href="#back"/></svg></button>
        <button class="tool" aria-label="置于对象之上"><svg class="icon"><use href="#above"/></svg></button>
        <button class="tool" aria-label="置于对象之下"><svg class="icon"><use href="#under"/></svg></button>
        <i class="hsep"></i>
        <button class="tool" aria-label="文字前置"><svg class="icon"><use href="#textfront"/></svg></button>
        <button class="tool" aria-label="图案填充后置"><svg class="icon"><use href="#hatchback"/></svg></button>
      </div>
    </aside>
  </main>

  <section class="command">
    <div class="cmd-side"><i class="grip"></i><button aria-label="关闭命令行">✕</button><button aria-label="自定义"><svg class="icon"><use href="#wrench"/></svg></button></div>
    <div class="cmd-main">
      <div class="history"><span>命令:</span><span>&lt;栅格 关&gt;</span></div>
      <label class="cmd-line"><svg class="icon"><use href="#prompt"/></svg><i class="tri"></i><input type="text" placeholder="键入命令" aria-label="命令"></label>
    </div>
  </section>

  <footer class="status">
    <output class="coords">5420.2418, 2438.8708, 0.0000</output>
    <div class="modes">
      <button aria-label="推断约束"><svg class="icon"><use href="#infer"/></svg></button>
      <button aria-label="捕捉"><svg class="icon"><use href="#snap"/></svg></button>
      <button aria-label="栅格"><svg class="icon"><use href="#grid"/></svg></button>
      <button aria-label="正交"><svg class="icon"><use href="#ortho"/></svg></button>
      <button aria-label="极轴"><svg class="icon"><use href="#polar"/></svg></button>
      <button class="on" aria-label="对象捕捉"><svg class="icon"><use href="#osnap"/></svg></button>
      <button aria-label="三维对象捕捉"><svg class="icon"><use href="#osnap3"/></svg></button>
      <button class="on" aria-label="对象捕捉追踪"><svg class="icon"><use href="#otrack"/></svg></button>
      <button aria-label="动态 UCS"><svg class="icon"><use href="#ducs"/></svg></button>
      <button class="on" aria-label="动态输入"><svg class="icon"><use href="#dyn"/></svg></button>
      <button aria-label="线宽"><svg class="icon"><use href="#lwt"/></svg></button>
      <button class="on" aria-label="透明度"><svg class="icon"><use href="#tpy"/></svg></button>
      <button aria-label="快捷特性"><svg class="icon"><use href="#qp"/></svg></button>
      <button aria-label="选择循环"><svg class="icon"><use href="#sc"/></svg></button>
    </div>
    <div class="tray">
      <div class="traygroup"><button aria-label="模型"><svg class="icon"><use href="#modelspace"/></svg></button><button aria-label="快速查看"><svg class="icon"><use href="#quickview"/></svg></button></div>
      <div class="traygroup"><button class="scale"><svg class="icon"><use href="#annot"/></svg><span>1:1</span><i class="tri"></i></button><button aria-label="注释可见性"><svg class="icon"><use href="#annotvis"/></svg></button><button aria-label="自动缩放"><svg class="icon faded"><use href="#annot"/></svg></button></div>
      <div class="traygroup"><button aria-label="切换工作空间"><svg class="icon"><use href="#gear"/></svg></button><button aria-label="锁定"><svg class="icon"><use href="#padlock"/></svg></button></div>
      <div class="traygroup"><button aria-label="硬件加速"><svg class="icon"><use href="#hardware"/></svg></button></div>
      <div class="traygroup"><button aria-label="隔离对象"><svg class="icon"><use href="#bulb"/></svg></button></div>
      <div class="traygroup"><button class="narrow" aria-label="状态栏菜单"><i class="tri"></i></button><button aria-label="全屏显示"><svg class="icon"><use href="#cleanscreen"/></svg></button></div>
      <i class="sizer"></i>
    </div>
  </footer>
  <div class="watermark">头条号 / 创中人家装设计师</div>
</div>
</body>
</html>
```
FILE: styles.css
```css
* { box-sizing: border-box; }
html, body { height: 100%; margin: 0; }
body {
  overflow: hidden;
  background: #686868;
  font-family: "Open Sans", "Noto Sans CJK SC", sans-serif;
  font-size: 13px;
  color: #222;
}
button, input, select { font: inherit; color: inherit; margin: 0; padding: 0; border: 0; background: none; border-radius: 0; }
button { display: flex; align-items: center; justify-content: center; flex: none; }
i { display: block; flex: none; font-style: normal; }
.sprite { position: absolute; width: 0; height: 0; }

.icon { width: 16px; height: 16px; flex: none; display: block; fill: none; stroke: currentColor; stroke-width: 1; }
.f { fill: var(--soft, #e3e8f0); }
.w { fill: #fff; }
.d { fill: var(--dark, #7d8590); }
.k { fill: #000; stroke: none; }
.b2 { stroke-width: 1.5; }
.tri { border: 3px solid transparent; border-top: 4px solid currentColor; border-bottom: 0; }
.faded { opacity: .5; }

.window {
  position: relative;
  height: 100%;
  display: flex;
  flex-direction: column;
  border: solid #1c64ae;
  border-width: 0 4px 5px 3px;
  border-image: linear-gradient(90deg, #58d4f4, #1d86d8 50%, #1b5fb4) 1;
  border-image-slice: 0 1 1 1;
  background: #686868;
}

/* title bar */
.titlebar {
  height: 28px;
  flex: none;
  display: flex;
  align-items: flex-start;
  margin: 0 -4px 0 -3px;
  padding-left: 44px;
  background: linear-gradient(90deg, #1a68b8, #1b6fcb 35%, #1a64bb 65%, #134f97);
  border-bottom: 1px solid #1c2a3c;
  box-shadow: inset 0 -1px #8fc0ea;
}
.quick, .info {
  display: flex;
  align-items: center;
  height: 23px;
  margin-top: 4px;
  color: #3a86cc;
  --soft: #e8fbff;
  --dark: #9bcdf2;
  background: linear-gradient(#e0fdff, #a6ecfb);
}
.quick { padding-left: 5px; }
.qbtn { width: 24px; height: 22px; }
.drop { width: 12px; height: 20px; }
.drop::before { content: ""; border: 3px solid transparent; border-top: 3px solid currentColor; border-bottom: 0; }
.drop.big { width: 15px; margin-right: 2px; color: #125a9c; }
.drop.big::before { border-width: 5px 4px 0; }
.quick-combo { width: 179px; }
.caption { flex: 1; display: flex; justify-content: center; gap: 24px; padding: 2px 0 0 6px; line-height: 20px; color: #061a38; text-shadow: 0 0 8px #9cd0ff, 0 0 8px #9cd0ff; }
.info { width: 444px; background: linear-gradient(#c9fbff, #8fd8fb); }
.info-toggle { width: 14px; height: 23px; background: linear-gradient(90deg, #c4f8ff, #7beaff); }
.info-toggle::before { content: ""; border: 4px solid transparent; border-left: 5px solid #0c4c84; border-right: 0; }
.search { width: 179px; height: 21px; padding: 0 4px; background: #fff; font-size: 11px; }
.search::placeholder { color: #8ccdf2; font-style: italic; opacity: 1; }
.login { gap: 4px; width: 120px; justify-content: flex-start; padding-left: 4px; font-size: 12px; color: #3a86cc; }
.login span { color: #fff; }
.login .tri { margin-left: auto; border-width: 3px 3px 0; }
.qbtn.last { margin-left: 10px; }
.sysbtns {
  display: flex;
  margin: 0 3px 0 21px;
  height: 16px;
  border: 1px solid #86aee0;
  border-top: 0;
  border-radius: 0 0 5px 5px;
  background: linear-gradient(#3a70b8, #2f62a8);
}
.sysbtns button { width: 28px; height: 14px; border-right: 1px solid #6a94cc; }
.sysbtns .sys-close { width: 46px; border: 0; }
.sysbtns svg { width: 12px; height: 12px; fill: #fff; stroke: #3a4a66; stroke-width: .5; }

.app {
  position: absolute;
  left: 0;
  top: 4px;
  width: 41px;
  height: 41px;
  gap: 4px;
  border: 1px solid #111;
  background: linear-gradient(#b4b4b4, #6a6a6a);
  color: #222;
}
.app-logo { width: 24px; height: 27px; }

/* menu */
.menubar {
  height: 21px;
  flex: none;
  display: flex;
  align-items: center;
  gap: 24px;
  padding-left: 55px;
  background: linear-gradient(#a2a2a2, #5a5a5a);
}
.menubar a { color: #fff; text-decoration: none; font: 12px/20px "Noto Sans CJK SC", sans-serif; white-space: nowrap; }
.mdi { margin-left: auto; display: flex; gap: 5px; padding-right: 5px; }
.mdi svg { width: 12px; height: 12px; fill: none; stroke: #1c1c1c; }

/* drawing tabs */
.filetabs {
  height: 27px;
  flex: none;
  display: flex;
  align-items: flex-end;
  padding: 0 0 1px 12px;
  background: linear-gradient(#a3a3a3, #929292);
  border-bottom: 1px solid #b0b0b0;
}
.filetab { position: relative; height: 23px; width: 142px; display: flex; align-items: center; padding: 0 21px 0 20px; justify-content: space-between; color: #1c1c1c; }
.filetab span { position: relative; }
.tab-shape { position: absolute; left: 0; top: 0; width: 100%; height: 100%; fill: #c2c2c2; stroke: #d8d8d8; }
.tab-x { position: relative; font-size: 10px; color: #7c7c7c; }
.newtab { height: 19px; align-items: flex-start; margin-left: -2px; }
.newtab svg { width: 23px; height: 16px; fill: #7d7d7d; stroke: #5a5a5a; }
.newtab .plus { stroke: #a8a8a8; stroke-width: 3; }

/* toolbars */
.toolrow { display: flex; flex: none; margin-top: 4px; gap: 1px; color: #394252; }
.toolrow + .toolrow { margin-top: 3px; gap: 2px; }
.toolbar { display: flex; align-items: stretch; height: 24px; border: 1px solid #3c3c3c; border-left: 0; background: #ececec; }
.grip {
  width: 8px;
  background: radial-gradient(circle at 1px 1px, #333 0 1px, transparent 1px) 1px 2px / 3px 3px, #6c6c6c;
}
.tool { width: 23px; height: 22px; color: #394252; }
.toolbar .drop { width: 13px; height: 22px; color: #222; }
.sep { width: 6px; background: linear-gradient(90deg, transparent 2px, #8c8c8c 2px 3px, transparent 3px); }
.styles .sep, .props .sep { width: 7px; }
.styles .grip { margin-right: 2px; }
.combo { position: relative; display: flex; }
.combo::after { content: ""; position: absolute; right: 3px; top: 9px; border: 4px solid transparent; border-top: 5px solid #000; border-bottom: 0; pointer-events: none; }
.combo select {
  appearance: none;
  width: 100%;
  height: 22px;
  padding: 0 14px 0 4px;
  border: 1px solid #9a9a9a;
  border-radius: 2px;
  background: linear-gradient(#f8f8f8, #d2d2d2);
  color: #1a1a1a;
  font-size: 12px;
}
.combo-art { position: absolute; left: 5px; top: 0; height: 22px; display: flex; align-items: center; pointer-events: none; }
.w-style { width: 119px; }
.indent select { padding-left: 18px; }
.w-space { width: 175px; }
.w-space select { padding-left: 8px; }
.w-layer { width: 299px; }
.w-layer select { padding-left: 84px; }
.w-color { width: 149px; }
.w-color select { padding-left: 18px; }
.w-ltype { width: 160px; }
.w-ltype select { padding-left: 69px; }
.w-lwt { width: 125px; }
.w-lwt select { padding-left: 43px; }
.w-plot { width: 119px; }
.w-plot select { padding-left: 9px; }
.props select { font-family: "Liberation Serif", serif; color: #000; }
.off select { background: #f2f2f2; color: #7a7a7a; opacity: 1; }
.off::after { border-top-color: #a8a8a8; }
.w-layer .swatch { margin-left: 1px; }
.swatch { width: 10px; height: 10px; border: 1px solid #000; background: #fff; }
.rule { width: 60px; height: 1px; background: #000; }
.rule.short { width: 35px; }
.quick-combo select { border: 0; border-radius: 0; background: #f2feff; color: #2a78c4; padding-left: 21px; font-size: 13px; height: 21px; }
.quick-combo .combo-art { left: 3px; top: 2px; height: 16px; }
.quick-combo::after { border-width: 4px 3px 0; border-top-color: #4a9ad8; }

/* work area */
.work { flex: 1; min-height: 0; display: flex; margin-top: 4px; }
.side { width: 30px; flex: none; }
.side.right { width: 34px; padding-left: 4px; }
.palette { width: 25px; display: flex; flex-direction: column; border: 1px solid #3a3a3a; border-top: 0; background: #ebebeb; }
.palette + .palette { margin-top: 1px; }
.palette .grip { width: auto; height: 9px; background: radial-gradient(circle at 1px 1px, #333 0 1px, transparent 1px) 1px 1px / 3px 3px, #6c6c6c; }
.palette .tool { height: 22px; }
.hsep { height: 1px; margin: 2px 2px 3px; background: #9a9a9a; }
.document {
  flex: 1;
  min-width: 0;
  display: grid;
  grid-template-columns: minmax(0, 1fr) 18px;
  grid-template-rows: minmax(0, 1fr) 17px;
  margin-bottom: 4px;
  border-top: 2px solid #a8a8a8;
  border-left: 1px solid #a8a8a8;
}
.canvas { position: relative; overflow: hidden; background: #000; }
.viewlabel { position: absolute; left: 4px; top: 5px; font: 12px/18px "Noto Sans CJK SC", sans-serif; color: #e8e8e8; }
.floating { position: absolute; left: 75px; top: 24px; border-right: 0; }
.float-x { width: 9px; background: #6c6c6c; color: #fff; font-size: 9px; line-height: 10px; align-items: flex-start; padding-top: 2px; }
.cross-h, .cross-v, .pickbox, .ucs, .viewcube, .wcs { position: absolute; }
.cross-h { left: 0; right: 0; top: 237px; height: 1px; background: #fff; }
.cross-v { top: 0; bottom: 0; left: 1003px; width: 1px; background: #fff; }
.pickbox { left: 993px; top: 227px; width: 21px; height: 21px; border: 1px solid #fff; }
.ucs { left: 628px; top: 336px; width: 76px; height: 74px; fill: none; stroke: #fff; }
.viewcube {
  right: 23px;
  top: 22px;
  width: 120px;
  height: 120px;
  border: 13px solid #2a2a2a;
  border-radius: 50%;
  color: #a2a2a2;
  font: 500 18px/20px "Noto Sans CJK SC", sans-serif;
}
.viewcube span { position: absolute; }
.viewcube .n { left: 38px; top: -19px; }
.viewcube .s { left: 38px; bottom: -19px; }
.viewcube .w-dir { left: -19px; top: 37px; }
.viewcube .e { right: -19px; top: 37px; }
.face { width: 52px; height: 52px; margin: 21px; background: linear-gradient(#92939c, #92939c) center / 32px 32px no-repeat, #a2a2a2; color: #50525c; font: 28px/30px "Noto Sans CJK SC", sans-serif; }
.wcs { right: 59px; top: 169px; width: 48px; height: 18px; gap: 7px; border: 2px solid #85858d; border-radius: 4px; background: #77777f; color: #333; font: 11px/14px "Liberation Sans", sans-serif; }
.wcs i { width: 7px; height: 2px; background: #9c9ca4; }

.vscroll { display: flex; flex-direction: column; align-items: center; padding: 6px 0; background: #efefef; }
.vscroll button, .hscroll button { width: 14px; height: 8px; }
.vscroll button::before, .hscroll button::before { content: ""; border: 3px solid transparent; }
.vscroll .up::before { border-bottom: 4px solid #444; border-top: 0; }
.vscroll .down::before { border-top: 4px solid #444; border-bottom: 0; }
.thumb { width: 15px; height: 15px; border: 1px solid #8c8c8c; background: linear-gradient(90deg, #f6f6f6, #c8c8c8); }
.vscroll .thumb { margin: 296px 0 auto; }
.layoutbar { display: flex; align-items: stretch; background: #efefef; border-bottom: 1px solid #fff; }
.navs { display: flex; margin-right: 4px; }
.navs button { width: 14px; border: 1px solid #b4b4b4; }
.navs svg { width: 12px; height: 12px; fill: none; stroke: #444; }
.navs .solid { fill: #444; stroke: none; }
.ltab { padding: 0 3px; font: 12px/16px "Noto Sans CJK SC", sans-serif; color: #000; }
.ltab.on { background: #000; color: #fff; font-weight: 700; padding: 0 2px 0 8px; clip-path: polygon(0 0, 100% 0, 100% 100%, 7px 100%); }
.slash { width: 9px; background: linear-gradient(to bottom right, transparent calc(50% - 1px), #444 50%, transparent calc(50% + 1px)); }
.on + .slash { background: linear-gradient(to bottom right, #000 calc(50% - 1px), #444 50%, transparent calc(50% + 1px)); }
.hscroll { width: 34%; margin-left: auto; display: flex; align-items: center; }
.split { width: 4px; height: 13px; border: 1px solid #999; margin-right: 4px; }
.hscroll .left::before { border-right: 4px solid #333; border-left: 0; }
.hscroll .right::before { border-left: 4px solid #333; border-right: 0; }
.hscroll .thumb { margin: 0 auto 0 304px; height: 14px; background: linear-gradient(#f6f6f6, #c4c4c4); }
.corner { background: #f2f2f2; border-top: 1px solid #aaa; }

/* command line */
.command { display: flex; flex: none; height: 53px; }
.cmd-side { width: 23px; flex: none; display: flex; flex-direction: column; align-items: center; background: linear-gradient(#8a8a8a, #3c3c3c); color: #eee; }
.cmd-side .grip { width: 17px; height: 6px; margin: 5px 0 3px; background: radial-gradient(circle at 1px 1px, #bbb 0 1px, transparent 1px) 0 0 / 3px 3px; }
.cmd-side button { height: 17px; font-size: 12px; font-weight: 700; color: #f2f2f2; margin-bottom: 2px; }
.cmd-side .icon { width: 14px; height: 14px; }
.cmd-main { flex: 1; display: flex; flex-direction: column; min-width: 0; }
.history { display: flex; gap: 16px; height: 30px; padding: 10px 2px 0; background: #c8c8c8; border-bottom: 1px solid #777; font: 12px/20px "Noto Sans CJK SC", sans-serif; color: #111; }
.cmd-line { flex: 1; display: flex; align-items: center; padding-left: 5px; background: #fff; color: #777; border-bottom: 1px solid #222; }
.cmd-line .tri { margin: 0 8px 0 3px; }
.cmd-line input { flex: 1; font: italic 12px/18px "Noto Sans CJK SC", sans-serif; outline: 0; }
.cmd-line input::placeholder { color: #8a8a8a; opacity: 1; }

/* status bar */
.status { display: flex; flex: none; height: 22px; align-items: stretch; background: linear-gradient(#7c7c7c, #8c8c8c 50%, #6c6c6c); }
.coords { width: 217px; padding-left: 11px; font: 10px/25px "DejaVu Sans Mono", monospace; color: #111; white-space: pre; }
.modes, .traygroup { display: flex; }
.modes button { width: 22px; background: linear-gradient(#a8a8a8, #8c8c8c); border-right: 1px solid #6c6c6c; color: #2a2a2a; }
.modes .on { background: linear-gradient(#e0f4fb, #a4d4e6); }
.tray { margin-left: auto; display: flex; }
.traygroup { margin-left: 18px; }
.traygroup button { width: 22px; background: #8e8e8e; border-right: 1px solid #727272; color: #3a3a3a; }
.traygroup .scale { width: 54px; gap: 3px; font: 13px/20px "Liberation Serif", serif; color: #111; }
.traygroup .narrow { width: 10px; }
.traygroup:nth-child(n+3) { margin-left: 6px; }
.sizer { width: 12px; height: 12px; margin: 8px 1px 0 3px; background: radial-gradient(circle at 1px 1px, #ddd 0 1px, transparent 1px) 0 0 / 4px 4px; clip-path: polygon(100% 0, 100% 100%, 0 100%); }
.watermark {
  position: absolute;
  right: 14px;
  bottom: 4px;
  font: 300 36px/48px "Noto Sans CJK SC", sans-serif;
  color: #fff;
  text-shadow: 1px 1px 1px #555, 2px 2px 2px #777;
  white-space: nowrap;
  pointer-events: none;
}
```
